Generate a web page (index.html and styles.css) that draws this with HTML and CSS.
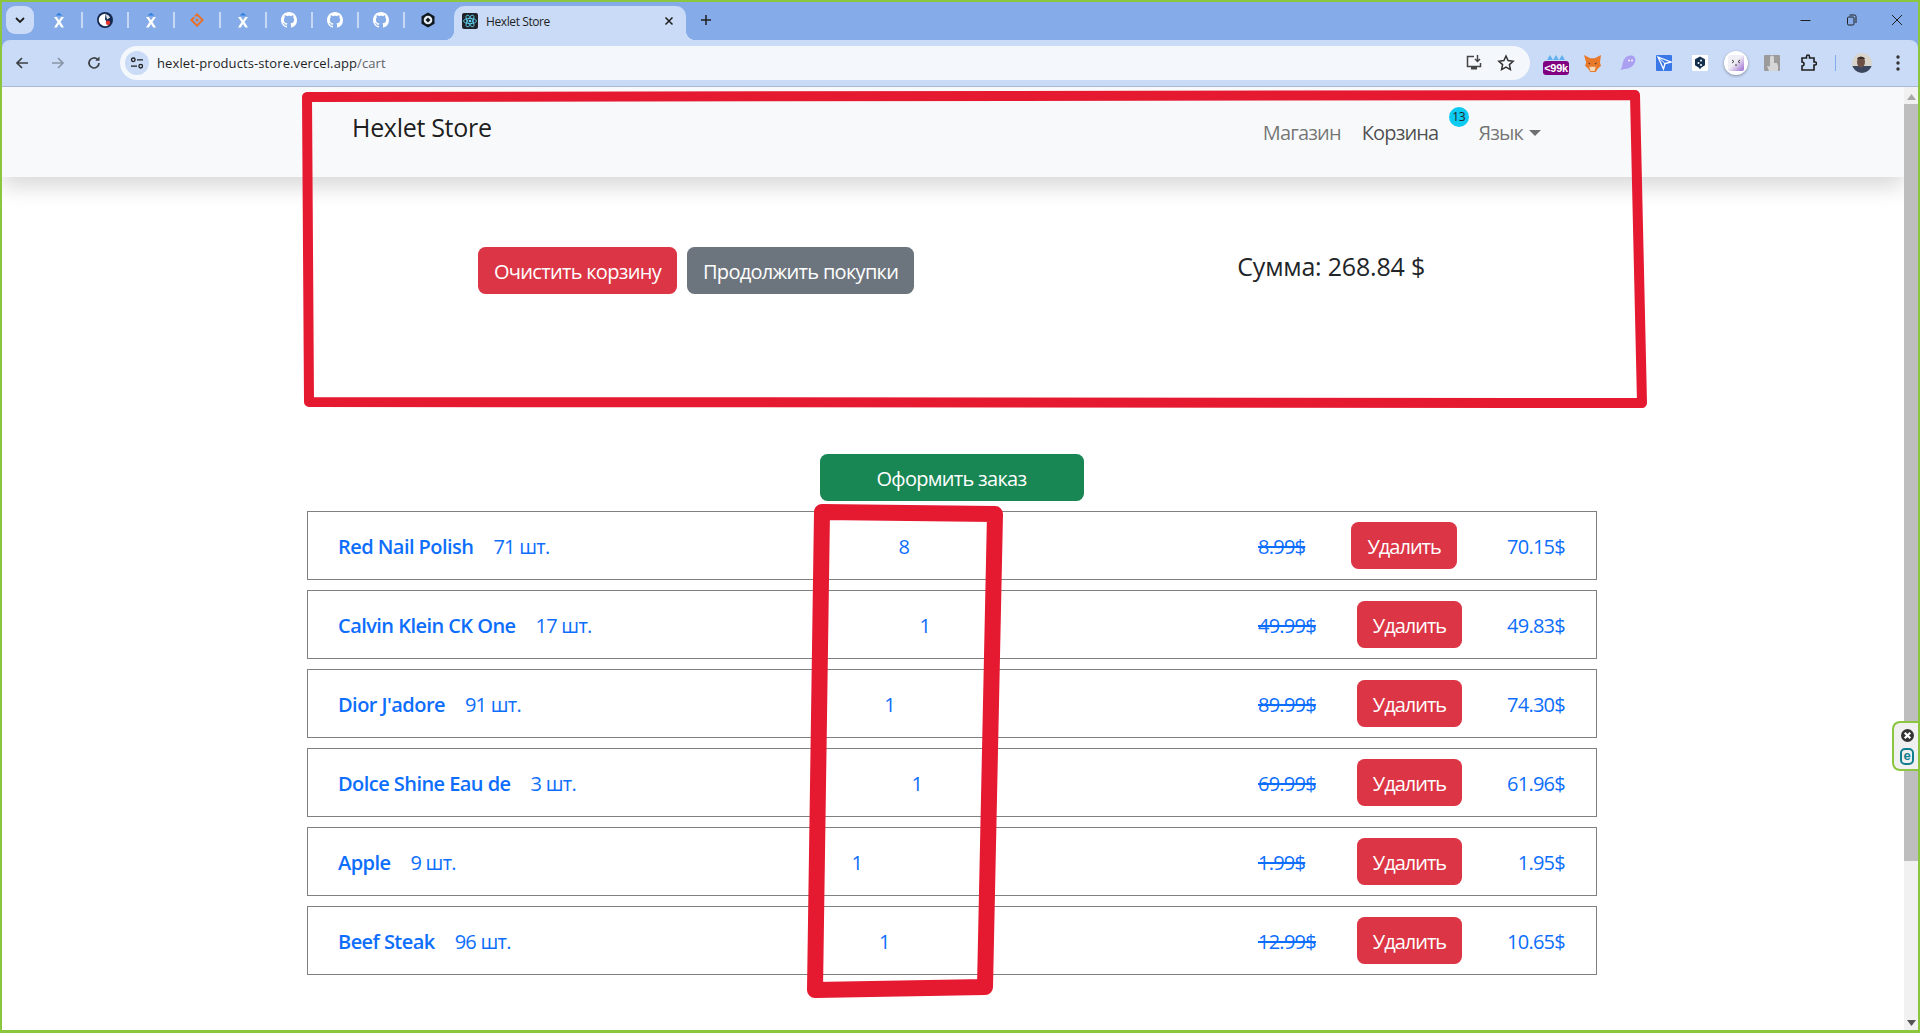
FILE: index.html
```html
<!DOCTYPE html>
<html lang="ru">
<head>
<meta charset="utf-8">
<title>Hexlet Store</title>
<link rel="stylesheet" href="styles.css">
</head>
<body>
<svg class="defs" width="0" height="0" aria-hidden="true">
  <symbol id="gh" viewBox="0 0 16 16"><path fill="#fff" d="M8 0C3.58 0 0 3.58 0 8c0 3.54 2.29 6.53 5.47 7.59.4.07.55-.17.55-.38 0-.19-.01-.82-.01-1.49-2.01.37-2.53-.49-2.69-.94-.09-.23-.48-.94-.82-1.13-.28-.15-.68-.52-.01-.53.63-.01 1.08.58 1.23.82.72 1.21 1.87.87 2.33.66.07-.52.28-.87.51-1.07-1.78-.2-3.64-.89-3.64-3.95 0-.87.31-1.59.82-2.15-.08-.2-.36-1.02.08-2.12 0 0 .67-.21 2.2.82.64-.18 1.32-.27 2-.27.68 0 1.36.09 2 .27 1.53-1.04 2.2-.82 2.2-.82.44 1.1.16 1.92.08 2.12.51.56.82 1.27.82 2.15 0 3.07-1.87 3.75-3.65 3.95.29.25.54.73.54 1.48 0 1.07-.01 1.93-.01 2.2 0 .21.15.46.55.38A8.013 8.013 0 0016 8c0-4.42-3.58-8-8-8z"/></symbol>
  <symbol id="xf" viewBox="0 0 16 16"><path fill="#2f7fe0" d="M4.500 3.500 8 .8l3.500 2.700z"/><path fill="#fff" d="M3 5h2.800L8 8.300 10.200 5H13L9.500 10 13 15.500h-2.800L8 12 5.800 15.500H3L6.500 10z"/></symbol>
</svg>
<div class="window">
  <header class="tabstrip">
    <button class="tab-menu"><svg width="12" height="8" viewBox="0 0 12 8"><path d="M2 2l4 4 4-4" fill="none" stroke="#1f1f1f" stroke-width="1.800"/></svg></button>
    <div class="pinned">
      <span class="pin"><svg width="16" height="16"><use href="#xf"/></svg></span>
      <span class="pin"><svg width="16" height="16" viewBox="0 0 16 16"><circle cx="8" cy="8" r="8" fill="#14284f"/><path d="M8 1.800a6.200 6.200 0 1 0 3.400 11.400l-1.400-2.600-2-3.400 .6-5.400z" fill="#fff"/><path d="M8.600 1.900a6.200 6.200 0 0 1 4.600 3.700L10 7.400z" fill="#fff" opacity=".85"/><circle cx="11" cy="10.800" r="2.200" fill="#e5322d"/></svg></span>
      <span class="pin"><svg width="16" height="16"><use href="#xf"/></svg></span>
      <span class="pin"><svg width="16" height="16" viewBox="0 0 16 16"><path d="M8 1l7 7-7 7-7-7 3.500-3.500L6 6 3.800 8 8 12.200 12.200 8 8 3.800 6.800 5 5.300 3.700z" fill="#e8702a"/><rect x="6.700" y="6.700" width="2.600" height="2.600" transform="rotate(45 8 8)" fill="#e8702a"/></svg></span>
      <span class="pin"><svg width="16" height="16"><use href="#xf"/></svg></span>
      <span class="pin"><svg width="16" height="16"><use href="#gh"/></svg></span>
      <span class="pin"><svg width="16" height="16"><use href="#gh"/></svg></span>
      <span class="pin"><svg width="16" height="16"><use href="#gh"/></svg></span>
      <span class="pin pin-last"><svg width="16" height="16" viewBox="0 0 16 16"><path d="M8 .5 14.500 4.200v7.600L8 15.500 1.500 11.800V4.200z" fill="#101820"/><circle cx="8" cy="8" r="4.300" fill="#e8eef2"/><path d="M8 5.500 10.500 8 8 10.500 5.500 8z" fill="#101820"/></svg></span>
    </div>
    <div class="tab">
      <svg class="tab-icon" width="16" height="16" viewBox="0 0 16 16"><rect width="16" height="16" rx="2" fill="#20232a"/><g fill="none" stroke="#61dafb" stroke-width=".8"><ellipse cx="8" cy="8" rx="6.500" ry="2.600"/><ellipse cx="8" cy="8" rx="6.500" ry="2.600" transform="rotate(60 8 8)"/><ellipse cx="8" cy="8" rx="6.500" ry="2.600" transform="rotate(120 8 8)"/></g><circle cx="8" cy="8" r="1.300" fill="#61dafb"/></svg>
      <span class="tab-title">Hexlet Store</span>
      <svg class="tab-close" width="10" height="10" viewBox="0 0 10 10"><path d="M1.500 1.500l7 7m0-7l-7 7" stroke="#1f1f1f" stroke-width="1.500"/></svg>
    </div>
    <svg class="new-tab" width="12" height="12" viewBox="0 0 12 12"><path d="M6 1v10M1 6h10" stroke="#1f1f1f" stroke-width="1.500"/></svg>
    <div class="win-controls">
      <span class="win-btn"><svg width="11" height="11" viewBox="0 0 11 11"><path d="M.5 5.500h10" stroke="#1f1f1f"/></svg></span>
      <span class="win-btn"><svg width="11" height="12" viewBox="0 0 11 12"><rect x="1.500" y="3" width="6.500" height="8" rx="1.200" fill="none" stroke="#1f1f1f"/><path d="M3.500 1h5a1.500 1.500 0 0 1 1.500 1.500V9" fill="none" stroke="#1f1f1f"/></svg></span>
      <span class="win-btn win-close"><svg width="12" height="12" viewBox="0 0 12 12"><path d="M1 1l10 10M11 1 1 11" stroke="#1f1f1f"/></svg></span>
    </div>
  </header>

  <div class="toolbar">
    <span class="nav-btn"><svg width="16" height="16" viewBox="0 0 16 16"><path d="M14 8H3M8 3 3 8l5 5" fill="none" stroke="#3c4043" stroke-width="1.700"/></svg></span>
    <span class="nav-btn"><svg width="16" height="16" viewBox="0 0 16 16"><path d="M2 8h11M8 3l5 5-5 5" fill="none" stroke="#8a95a8" stroke-width="1.700"/></svg></span>
    <span class="nav-btn"><svg width="16" height="16" viewBox="0 0 16 16"><path d="M13 8a5 5 0 1 1-1.500-3.600" fill="none" stroke="#3c4043" stroke-width="1.700"/><path d="M13.500 1.500v4.200H9.300z" fill="#3c4043"/></svg></span>
    <div class="omnibox">
      <span class="site-info"><svg width="14" height="14" viewBox="0 0 14 14"><g fill="none" stroke="#1f1f1f" stroke-width="1.300"><circle cx="3.300" cy="3.800" r="1.800"/><path d="M7 3.800h6M1 10.200h6"/><circle cx="10.700" cy="10.200" r="1.800"/></g></svg></span>
      <span class="url">hexlet-products-store.vercel.app<span class="url-path">/cart</span></span>
      <span class="omni-icons">
        <span class="omni-icon"><svg width="18" height="18" viewBox="0 0 18 18"><path d="M9 2.500H2.500v10h13V9" fill="none" stroke="#444" stroke-width="1.500"/><path d="M6 12.500h6v3H6z" fill="#444"/><path d="M12.500 1v6M10 5l2.500 2.500L15 5" fill="none" stroke="#444" stroke-width="1.500"/></svg></span>
        <span class="omni-icon"><svg width="18" height="18" viewBox="0 0 18 18"><path d="M9 2l2.100 4.600 5 .6-3.700 3.400 1 5L9 13.100 4.600 15.600l1-5L1.900 7.200l5-.6z" fill="none" stroke="#333" stroke-width="1.500"/></svg></span>
      </span>
    </div>
    <div class="extensions">
      <span class="ext ext-gas"><svg class="drops" width="18" height="6" viewBox="0 0 18 6"><path d="M3 0l3 5H0zM9 0l3 5H6zM15 0l3 5h-6z" fill="#5fb2f0"/></svg><span class="gas-badge">&lt;99k</span></span>
      <span class="ext"><svg width="17" height="17" viewBox="0 0 16 16"><path d="M0 0l6 3h4l6-3-1 7 1 3-3 3-2 3H6l-2-3-3-3 1-3z" fill="#e8782a"/><path d="M5 11h6l-1 4H6z" fill="#f4d8b8"/><path d="M4 7l2 1-1 1zM12 7l-2 1 1 1z" fill="#42302a"/></svg></span>
      <span class="ext"><svg width="18" height="16" viewBox="0 0 18 16"><path d="M1 15c2-1 2-5 3-8 1.500-5 5-7 8.500-6.500C16 1 17 4 16 7c-1 4-6 7-10 7-2 0-3 1-5 1z" fill="#ab9ff2"/><circle cx="10" cy="5.500" r=".9" fill="#fff"/><circle cx="13" cy="5.500" r=".9" fill="#fff"/></svg></span>
      <span class="ext"><svg width="16" height="16" viewBox="0 0 16 16"><rect width="16" height="16" rx="1" fill="#3b78e7"/><path d="M2 2l13 5-6 1.500L7.500 14z" fill="none" stroke="#fff" stroke-width="1.300"/><path d="M2 2l7 6.500" stroke="#fff"/></svg></span>
      <span class="ext"><svg width="16" height="16" viewBox="0 0 16 16"><rect width="16" height="16" rx="1" fill="#fff"/><path d="M8 1.500l5 2.800v6L9 12.700 8 14.500l-1-1.800-4-2.400v-6z" fill="#14304f"/><circle cx="9" cy="5.500" r="1" fill="#fff"/><circle cx="6.500" cy="8" r="1" fill="#fff"/><circle cx="9" cy="10" r="1" fill="#fff"/></svg></span>
      <span class="ext"><span class="ext-round"><svg width="16" height="16" viewBox="0 0 16 16"><defs><linearGradient id="mm" x1="0" y1="0" x2="1" y2="1"><stop offset=".45" stop-color="#f1eff6"/><stop offset="1" stop-color="#9a6ad0"/></linearGradient></defs><rect width="16" height="16" rx="2" fill="url(#mm)"/><path d="M4 5l2 1.500L4 8M12 5l-2 1.500L12 8M7 10h2" fill="none" stroke="#333" stroke-width=".9"/></svg></span></span>
      <span class="ext"><svg width="16" height="16" viewBox="0 0 16 16"><rect width="16" height="16" rx="1" fill="#9b9b9b"/><path d="M6 2.500a2 2 0 0 1 4 0V8h3l1 3v5H5l-2-5 3 .5z" fill="#d6d6d6"/></svg></span>
      <span class="ext"><svg width="18" height="18" viewBox="0 0 18 18"><path d="M3 4h4.500V2.500a1.500 1.500 0 0 1 3 0V4H15v4h1a1.500 1.500 0 0 1 0 3h-1v5H3v-4a2 2 0 0 0 0-4z" fill="none" stroke="#1f1f1f" stroke-width="1.600"/></svg></span>
    </div>
    <span class="tool-sep"></span>
    <span class="ext avatar-slot"><svg width="20" height="20" viewBox="0 0 20 20"><defs><clipPath id="av"><circle cx="10" cy="10" r="10"/></clipPath></defs><g clip-path="url(#av)"><rect width="20" height="20" fill="#d8d4cc"/><rect y="13" width="20" height="7" fill="#3a4660"/><ellipse cx="9" cy="9" rx="4" ry="5.500" fill="#6d5147"/><path d="M5 6c1-3 7-3 8 0H5z" fill="#3a2c28"/></g></svg></span>
    <span class="ext"><svg width="4" height="16" viewBox="0 0 4 16"><circle cx="2" cy="2" r="1.700" fill="#333"/><circle cx="2" cy="8" r="1.700" fill="#333"/><circle cx="2" cy="14" r="1.700" fill="#333"/></svg></span>
  </div>

  <div class="viewport">
    <main class="page">
      <nav class="navbar">
        <div class="nav-inner">
          <a class="brand">Hexlet Store</a>
          <div class="nav-links">
            <a class="nav-link">Магазин</a>
            <a class="nav-link nav-active">Корзина<span class="badge">13</span></a>
            <a class="nav-link nav-lang">Язык<span class="caret"></span></a>
          </div>
        </div>
      </nav>
      <section class="summary">
        <button class="btn btn-danger">Очистить корзину</button>
        <button class="btn btn-secondary">Продолжить покупки</button>
        <span class="total">Сумма: 268.84 $</span>
      </section>
      <div class="checkout"><button class="btn btn-success">Оформить заказ</button></div>
      <ul class="cart">
        <li class="row"><span class="item"><b class="name">Red Nail Polish</b><span class="stock">71 шт.</span></span><span class="qty">8</span><span class="prices"><s class="old">8.99$</s><button class="btn btn-danger btn-del">Удалить</button><span class="price">70.15$</span></span></li>
        <li class="row"><span class="item"><b class="name">Calvin Klein CK One</b><span class="stock">17 шт.</span></span><span class="qty">1</span><span class="prices"><s class="old">49.99$</s><button class="btn btn-danger btn-del">Удалить</button><span class="price">49.83$</span></span></li>
        <li class="row"><span class="item"><b class="name">Dior J'adore</b><span class="stock">91 шт.</span></span><span class="qty">1</span><span class="prices"><s class="old">89.99$</s><button class="btn btn-danger btn-del">Удалить</button><span class="price">74.30$</span></span></li>
        <li class="row"><span class="item"><b class="name">Dolce Shine Eau de</b><span class="stock">3 шт.</span></span><span class="qty">1</span><span class="prices"><s class="old">69.99$</s><button class="btn btn-danger btn-del">Удалить</button><span class="price">61.96$</span></span></li>
        <li class="row"><span class="item"><b class="name">Apple</b><span class="stock">9 шт.</span></span><span class="qty">1</span><span class="prices"><s class="old">1.99$</s><button class="btn btn-danger btn-del">Удалить</button><span class="price">1.95$</span></span></li>
        <li class="row"><span class="item"><b class="name">Beef Steak</b><span class="stock">96 шт.</span></span><span class="qty">1</span><span class="prices"><s class="old">12.99$</s><button class="btn btn-danger btn-del">Удалить</button><span class="price">10.65$</span></span></li>
      </ul>
    </main>
    <div class="scrollbar">
      <svg class="sb-arrow" width="9" height="6" viewBox="0 0 9 6"><path d="M4.500 0 9 6H0z" fill="#a8a8a8"/></svg>
      <div class="sb-thumb"></div>
      <svg class="sb-arrow sb-arrow-down" width="9" height="6" viewBox="0 0 9 6"><path d="M0 0h9L4.500 6z" fill="#555"/></svg>
    </div>
    <aside class="eset">
      <svg width="13" height="13" viewBox="0 0 14 14"><circle cx="7" cy="7" r="7" fill="#333"/><path d="M4 4l6 6m0-6-6 6" stroke="#fff" stroke-width="2.400"/></svg>
      <span class="eset-e">e</span>
    </aside>
  </div>

  <svg class="marks" width="1920" height="1033" viewBox="0 0 1920 1033" aria-hidden="true">
    <path class="mark mark-thin" d="M307 97 1635 95 1642 403 309 402Z"/>
    <path class="mark mark-thick" d="M822 512 995 514 985 987 815 990Z"/>
  </svg>
</div>
</body>
</html>
```

FILE: styles.css
```css
* { box-sizing: border-box; }
html, body { margin: 0; padding: 0; height: 100%; overflow: hidden; }
body { font-family: "Open Sans", "Noto Sans", sans-serif; background: #fff; }
.defs { position: absolute; }
button { font-family: inherit; }

.window {
  position: relative;
  width: 1920px;
  height: 1033px;
  display: flex;
  flex-direction: column;
  background: #85ace8;
  border: solid #8cc63f;
  border-width: 2px 2px 3px 2px;
  overflow: hidden;
}

/* tab strip */
.tabstrip { height: 38px; display: flex; align-items: flex-start; flex: none; }
.tab-menu {
  width: 28px; height: 28px; margin: 4px 0 0 4px; padding: 0; border: 0;
  border-radius: 9px; background: #c9dbf6;
  display: flex; align-items: center; justify-content: center;
}
.pinned { display: flex; margin: 10px 0 0 3px; }
.pin {
  width: 46px; height: 16px; display: flex; align-items: center; justify-content: center;
  border-right: 2px solid #c6d8f4;
}
.pin-last { border-right: 0; }
.tab {
  position: relative; width: 232px; height: 34px; margin: 4px 0 0 3px;
  background: #c9dbf6; border-radius: 10px 10px 0 0;
  display: flex; align-items: center; padding: 0 0 4px 8px;
}
.tab::before, .tab::after {
  content: ""; position: absolute; bottom: 0; width: 10px; height: 10px;
}
.tab::before { left: -10px; background: radial-gradient(circle at 0 0, transparent 10px, #c9dbf6 10.5px); }
.tab::after { right: -10px; background: radial-gradient(circle at 100% 0, transparent 10px, #c9dbf6 10.5px); }
.tab-title { margin-left: 8px; font-size: 12px; color: #1f1f1f; letter-spacing: -.4px; }
.tab-close { margin-left: auto; margin-right: 12px; }
.new-tab { margin: 12px 0 0 14px; }
.win-controls { margin-left: auto; margin-right: -2px; display: flex; }
.win-btn { width: 46px; height: 36px; display: flex; align-items: center; justify-content: center; }

/* toolbar */
.toolbar {
  height: 47px; flex: none; display: flex; align-items: center; padding: 0 2px;
  background: #c9dbf6; border-bottom: 1px solid #a9b8d4; border-radius: 8px 8px 0 0;
}
.nav-btn { width: 36px; height: 34px; display: flex; align-items: center; justify-content: center; flex: none; }
.omnibox {
  width: 1410px; height: 34px; margin-left: 8px; flex: none;
  background: #f4f7fc; border-radius: 17px; display: flex; align-items: center; padding: 0 8px 0 5px;
}
.site-info {
  width: 24px; height: 24px; border-radius: 50%; background: #c9dbf6;
  display: flex; align-items: center; justify-content: center;
}
.url { margin-left: 8px; font-size: 13px; color: #1f1f1f; letter-spacing: .1px; }
.url-path { color: #5f6368; }
.omni-icons { margin-left: auto; display: flex; }
.omni-icon { width: 32px; height: 32px; display: flex; align-items: center; justify-content: center; }
.extensions { display: flex; margin-left: 8px; }
.ext { width: 36px; height: 34px; display: flex; align-items: center; justify-content: center; flex: none; }
.ext-gas { flex-direction: column; gap: 0; padding-top: 4px; }
.gas-badge {
  width: 26px; height: 14px; border-radius: 3px; background: #800080; color: #fff;
  font: 700 11px/14px "Liberation Sans", sans-serif; text-align: center; letter-spacing: -.3px;
}
.ext-round {
  width: 24px; height: 24px; border-radius: 50%; background: #fff;
  box-shadow: 0 1px 3px rgba(0,0,0,.35);
  display: flex; align-items: center; justify-content: center;
}
.tool-sep { width: 1px; height: 16px; margin: 0 8px 0 9px; background: #85ace8; flex: none; }

/* viewport */
.viewport { flex: 1; min-height: 0; display: flex; position: relative; background: #fff; }
.page { flex: 1; min-width: 0; overflow: hidden; }
.scrollbar { width: 14px; background: #f1f1f1; display: flex; flex-direction: column; align-items: center; flex: none; }
.sb-arrow { margin: 7px 0 4px; flex: none; }
.sb-arrow-down { margin: auto 0 4px; }
.sb-thumb { width: 100%; height: 757px; background: #bebebe; flex: none; }
.eset {
  position: absolute; right: -2px; top: 634px; width: 28px; height: 50px;
  background: #f0f0f0; border: 2px solid #8cc63f; border-right: 0; border-radius: 8px 0 0 8px;
  display: flex; flex-direction: column; align-items: center; justify-content: space-between; padding: 6px 0 4px;
}
.eset-e {
  width: 14px; height: 17px; border: 2px solid #0f7f8f; border-radius: 5px;
  color: #0f7f8f; font: 700 13px/12px "Liberation Sans", sans-serif; text-align: center;
}

/* navbar */
.navbar { height: 90px; background: #f8f9fa; box-shadow: 0 10px 20px rgba(0,0,0,.15); position: relative; }
.nav-inner { width: 1290px; margin-left: 305px; padding: 0 56px 0 45px; display: flex; justify-content: space-between; }
.brand { margin-top: 21px; font-size: 25px; line-height: 38px; color: rgba(0,0,0,.9); letter-spacing: -.3px; }
.nav-links { display: flex; margin-top: 31px; font-size: 20px; line-height: 30px; gap: 21px; letter-spacing: -.85px; }
.nav-link { position: relative; color: rgba(0,0,0,.55); }
.nav-active { color: rgba(0,0,0,.7); margin-right: 19px; }
.badge {
  position: absolute; left: 87px; top: -11px; width: 20px; height: 20px; border-radius: 50%;
  background: #0dcaf0; color: #212529; font-size: 12px; line-height: 20px; text-align: center; letter-spacing: -.5px;
}
.nav-lang { display: flex; align-items: center; }
.caret { width: 0; height: 0; margin-left: 6px; border: 6px solid transparent; border-top-color: rgba(0,0,0,.55); border-bottom: 0; }

/* summary */
.summary { width: 1290px; margin-left: 305px; height: 277px; padding: 70px 173px 0 171px; display: flex; align-items: flex-start; }
.btn {
  height: 47px; padding: 2px 15px 0; border: 1px solid transparent; border-radius: 7.500px;
  font-size: 20px; line-height: 30px; color: #fff; white-space: nowrap; letter-spacing: -.7px;
}
.btn-danger { background: #dc3545; }
.btn-secondary { background: #6c757d; margin-left: 10px; }
.btn-success { background: #198754; width: 264px; }
.total { margin: 0 -1px 0 auto; font-size: 25px; line-height: 38px; color: #212529; letter-spacing: -.2px; }

/* cart */
.checkout { width: 1290px; margin-left: 305px; display: flex; justify-content: center; padding-right: 1px; }
.cart { width: 1290px; margin: 10px 0 0 305px; padding: 0; list-style: none; display: flex; flex-direction: column; gap: 10px; }
.row {
  height: 69px; border: 1px solid #808080; padding: 1px 31px 0 30px;
  display: flex; align-items: center; justify-content: space-between;
  font-size: 20px; color: #0d6efd; letter-spacing: -.75px;
}
.item { display: flex; gap: 20px; }
.name { font-weight: 600; letter-spacing: -.55px; }
.prices { width: 307px; display: flex; align-items: center; justify-content: space-between; flex: none; }
.btn-del { margin: -1px 4px 0 0; letter-spacing: -1px; }
.old { text-decoration-thickness: 2px; }
.mark { fill: none; stroke: #e5192f; stroke-linejoin: round; }
.mark-thin { stroke-width: 10px; }
.mark-thick { stroke-width: 16px; }
.marks { position: absolute; left: -2px; top: -2px; pointer-events: none; }
```
